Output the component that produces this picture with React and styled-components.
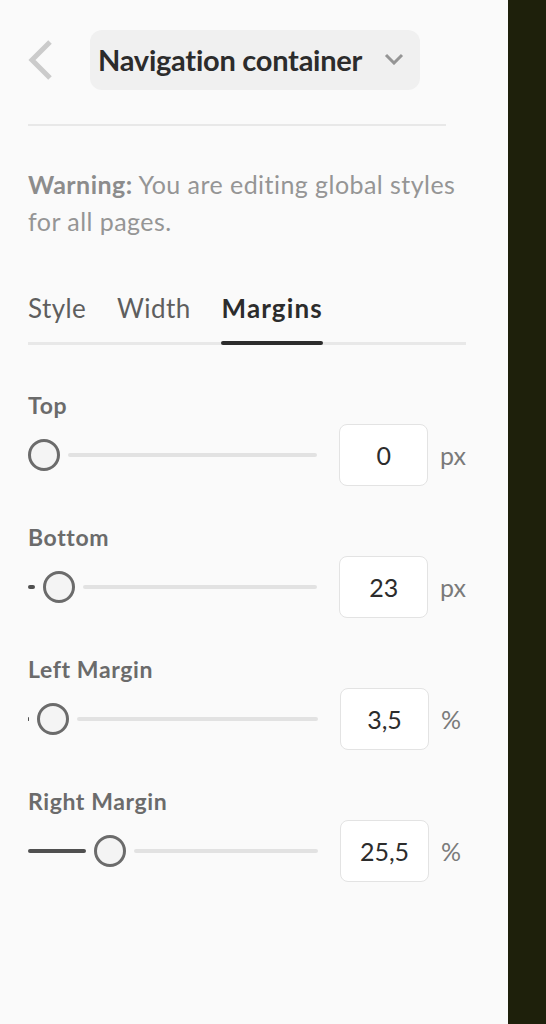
import React from 'react'
import styled, { createGlobalStyle } from 'styled-components'

const GlobalStyle = createGlobalStyle`
  html, body {
    margin: 0;
    padding: 0;
    background: #1e200b;
  }
  * { box-sizing: border-box; }
`

const font = `'Lato', 'Open Sans', sans-serif`

const Page = styled.div`
  display: flex;
  width: 546px;
  height: 1024px;
  background: #1e200b;
`

const Panel = styled.div`
  width: 508px;
  height: 1024px;
  background: #fafafa;
  padding: 30px 42px 0 28px;
  font-family: ${font};
`

const Header = styled.div`
  display: flex;
  align-items: center;
  height: 60px;
`

const BackButton = styled.button`
  border: 0;
  background: none;
  padding: 0;
  width: 24px;
  height: 40px;
  margin-right: 38px;
  display: flex;
  cursor: pointer;
`

const Picker = styled.div`
  display: flex;
  align-items: center;
  height: 60px;
  padding: 0 16px 2px 8px;
  border-radius: 12px;
  background: #f0f0f0;
  gap: 22px;
`

const PickerLabel = styled.span`
  font-size: 29px;
  font-weight: 700;
  letter-spacing: -0.25px;
  color: #2c2c2c;
`

const Divider = styled.hr`
  border: 0;
  height: 2px;
  background: #e8e8e8;
  margin: 34px 20px 0 0;
`

const Warning = styled.p`
  margin: 40px 0 0;
  font-size: 25px;
  letter-spacing: 0.45px;
  line-height: 37px;
  color: #959595;
  b { font-weight: 700; color: #8c8c8c; }
`

const TabBar = styled.div`
  display: flex;
  gap: 31px;
  margin-top: 40px;
  border-bottom: 3px solid #e8e8e8;
`

const Tab = styled.div`
  position: relative;
  font-size: 26px;
  line-height: 36px;
  padding: 10px 0 16px;
  letter-spacing: ${p => (p.$active ? '1.1px' : '0.4px')};
  color: ${p => (p.$active ? '#2c2c2c' : '#5e5e5e')};
  font-weight: ${p => (p.$active ? 700 : 400)};
  &::after {
    content: '';
    display: ${p => (p.$active ? 'block' : 'none')};
    position: absolute;
    left: -1px;
    right: 0;
    bottom: -3px;
    height: 4px;
    border-radius: 2px;
    background: #2c2c2c;
  }
`

const Fields = styled.div`
  margin-top: 45px;
  display: flex;
  flex-direction: column;
  gap: 36px;
`

const Field = styled.div`
  display: flex;
  flex-direction: column;
  gap: 4px;
`

const FieldLabel = styled.div`
  font-size: 23px;
  letter-spacing: 0.6px;
  line-height: 30px;
  font-weight: 700;
  color: #6b6b6b;
`

const Row = styled.div`
  display: flex;
  align-items: center;
  height: 62px;
`

const Slider = styled.div`
  display: flex;
  align-items: center;
  width: 290px;
  height: 32px;
`

const Filled = styled.div`
  height: 4px;
  border-radius: 2px;
  background: #505050;
  margin-right: 8px;
  flex: none;
`

const Thumb = styled.div`
  width: 32px;
  height: 32px;
  border-radius: 50%;
  border: 3px solid #6b6b6b;
  background: #f4f4f4;
  flex: none;
`

const Track = styled.div`
  flex: 1;
  height: 4px;
  border-radius: 2px;
  background: #e2e2e2;
  margin-left: 8px;
`

const ValueBox = styled.div`
  width: 89px;
  height: 62px;
  margin-left: 22px;
  border: 1.5px solid #e3e3e3;
  border-radius: 8px;
  background: #fff;
  display: flex;
  align-items: center;
  justify-content: center;
  font-size: 25px;
  color: #2c2c2c;
`

const Unit = styled.span`
  margin-left: 12px;
  font-size: 25px;
  color: #7a7a7a;
`

const fields = [
  { label: 'Top', fill: 0, value: '0', unit: 'px' },
  { label: 'Bottom', fill: 7, value: '23', unit: 'px' },
  { label: 'Left Margin', fill: 1, value: '3,5', unit: '%' },
  { label: 'Right Margin', fill: 58, value: '25,5', unit: '%' }
]

const BackIcon = () => (
  <svg width='24' height='40' viewBox='0 0 24 40'>
    <polyline points='22,2 4,20 22,38' fill='none' stroke='#cbcbcb' strokeWidth='5' />
  </svg>
)

const ChevronDown = () => (
  <svg width='20' height='12' viewBox='0 0 20 12'>
    <polyline points='2,2 10,10 18,2' fill='none' stroke='#959595' strokeWidth='3' />
  </svg>
)

export default function App () {
  return (
    <Page>
      <GlobalStyle />
      <Panel>
        <Header>
          <BackButton aria-label='Back'>
            <BackIcon />
          </BackButton>
          <Picker>
            <PickerLabel>Navigation container</PickerLabel>
            <ChevronDown />
          </Picker>
        </Header>
        <Divider />
        <Warning>
          <b>Warning:</b> You are editing global styles for all pages.
        </Warning>
        <TabBar>
          <Tab>Style</Tab>
          <Tab>Width</Tab>
          <Tab $active>Margins</Tab>
        </TabBar>
        <Fields>
          {fields.map(f => (
            <Field key={f.label}>
              <FieldLabel>{f.label}</FieldLabel>
              <Row>
                <Slider>
                  {f.fill > 0 && <Filled style={{ width: f.fill }} />}
                  <Thumb />
                  <Track />
                </Slider>
                <ValueBox>{f.value}</ValueBox>
                <Unit>{f.unit}</Unit>
              </Row>
            </Field>
          ))}
        </Fields>
      </Panel>
    </Page>
  )
}
